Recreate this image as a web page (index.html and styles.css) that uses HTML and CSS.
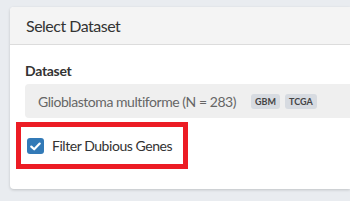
FILE: index.html
```html
<!DOCTYPE html>
<html>
<head>
<meta charset="utf-8">
<link rel="stylesheet" href="styles.css">
</head>
<body>
<div class="card">
  <div class="card-header">Select Dataset</div>
  <div class="card-body">
    <div class="label">Dataset</div>
    <div class="select">
      <span class="select-text">Glioblastoma multiforme (N = 283)</span>
      <span class="badge">GBM</span>
      <span class="badge">TCGA</span>
    </div>
    <div class="highlight">
      <span class="checkbox">
        <svg width="11" height="9" viewBox="0 0 11 9"><path d="M1.3 4.6 L4.2 7.3 L9.7 1.6" fill="none" stroke="#fff" stroke-width="2.2" stroke-linecap="round" stroke-linejoin="round"/></svg>
      </span>
      <span class="check-label">Filter Dubious Genes</span>
    </div>
  </div>
</div>
</body>
</html>
```
FILE: styles.css
```css
html, body {
  margin: 0;
  padding: 0;
}
body {
  background: #e9ecf0;
  width: 350px;
  height: 201px;
  overflow: hidden;
  font-family: Lato, "Noto Sans", sans-serif;
  color: #333;
}
.card {
  margin: 7px 0 0 10px;
  width: 340px;
  background: #fff;
  border-radius: 4px 0 0 4px;
  box-shadow: 0 1px 3px rgba(0,0,0,0.18);
}
.card-header {
  height: 37px;
  background: #f4f4f4;
  border-bottom: 1px solid #dcdcdc;
  border-radius: 4px 0 0 0;
  padding-left: 16px;
  font-size: 16px;
  letter-spacing: -0.5px;
  line-height: 37px;
  color: #333;
}
.card-body {
  padding: 17px 0 20px 15px;
}
.label {
  font-weight: bold;
  font-size: 14px;
  letter-spacing: -0.3px;
  line-height: 18px;
  color: #333;
}
.select {
  margin-top: 4px;
  height: 34px;
  background: #efefef;
  border-radius: 4px 0 0 4px;
  display: flex;
  align-items: center;
  padding-left: 13px;
}
.select-text {
  font-size: 14px;
  letter-spacing: -0.45px;
  color: #666;
  margin-right: 15px;
}
.badge {
  background: #d7dbe1;
  color: #444;
  font-weight: bold;
  font-size: 9px;
  border-radius: 3px;
  height: 15px;
  line-height: 15px;
  padding: 0 4px;
  margin-right: 5px;
}
.highlight {
  margin-top: 4px;
  margin-left: -9px;
  display: inline-flex;
  align-items: center;
  border: 5px solid #ec1c24;
  padding: 11px 11px 10px 6px;
}
.checkbox {
  width: 17px;
  height: 16px;
  background: #337ab7;
  border-radius: 3px;
  display: inline-flex;
  align-items: center;
  justify-content: center;
}
.check-label {
  margin-left: 8px;
  font-size: 14px;
  letter-spacing: -0.45px;
  color: #333;
  line-height: 16px;
}
```
